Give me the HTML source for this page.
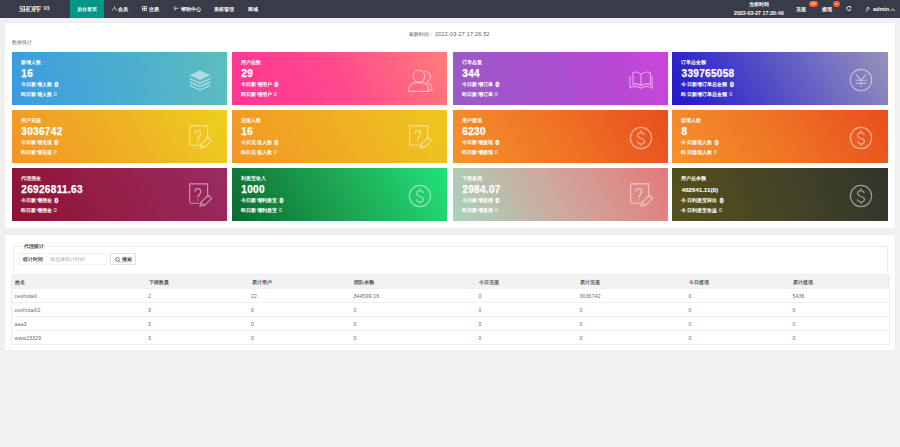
<!DOCTYPE html>
<html><head><meta charset="utf-8">
<style>
*{margin:0;padding:0;box-sizing:border-box}
html,body{width:900px;height:447px;overflow:hidden;background:#f0f0f0;font-family:"Liberation Sans",sans-serif;position:relative}
.hdr{position:absolute;left:0;top:0;width:900px;height:17.6px;background:#383c48}
.logo{position:absolute;left:19.2px;top:5.4px;font-family:"Liberation Serif",serif;color:#fff;font-size:7.3px;font-weight:normal;-webkit-text-stroke:0.15px #fff;line-height:9px;letter-spacing:-0.3px}
.logo sup{font-size:4.6px;vertical-align:top;position:relative;top:-1.4px;margin-left:3.2px;letter-spacing:0;font-family:"Liberation Sans",sans-serif}
.nav{position:absolute;top:0;height:17.6px;line-height:19.8px;color:#fff;font-size:4.7px;white-space:nowrap;font-weight:bold}
.nav.act{background:#009688;left:70px;width:34px;text-align:center}
.hi{position:absolute;fill:none;stroke:#fff;stroke-width:0.7}
.badge{position:absolute;top:1.3px;height:5.8px;border-radius:3px;background:#ff5722;color:#fff;font-size:4px;line-height:5.9px;text-align:center}
.panel{position:absolute;left:5px;top:22.8px;width:890.3px;height:205px;background:#fff;border-radius:1px;box-shadow:0 0 1px rgba(0,0,0,0.08)}
.p2{top:235px;height:114.5px}
.card{position:absolute;height:52.6px;color:#fff;overflow:hidden}
.ct{position:absolute;left:9.3px;top:6.8px;font-size:5px;line-height:6px;white-space:nowrap;font-weight:bold;letter-spacing:0px}
.cn{position:absolute;left:9.3px;top:15.6px;font-size:10px;line-height:11px;font-weight:bold;white-space:nowrap;letter-spacing:0.33px;-webkit-text-stroke:0.25px #fff}
.cn.sm{font-size:6.2px;top:15.8px;letter-spacing:0;-webkit-text-stroke:0.1px #fff}
.c3{position:absolute;left:9.3px;top:29.2px;font-size:5.3px;line-height:6px;white-space:nowrap;letter-spacing:0.1px;font-weight:bold}
.c3 b{font-size:6.8px;margin-left:1px;position:relative;top:0.6px;-webkit-text-stroke:0.35px #fff}
.c4 i{font-style:normal;font-weight:normal;margin-left:0.3px}
.c4{position:absolute;left:9.3px;top:39.3px;font-size:5.3px;line-height:6px;white-space:nowrap;letter-spacing:0.1px;font-weight:bold}
.ic{position:absolute;right:14px;top:15px;width:26px;height:26px;fill:none;stroke:rgba(255,255,255,0.5);stroke-width:1.15}
.txt{position:absolute;font-size:4.8px;line-height:6px;color:#666;white-space:nowrap}
.fs{position:absolute;left:12.5px;top:246px;width:875px;height:26px;border:0.5px solid #eee;border-bottom:none}
.legend{position:absolute;left:22.2px;top:243px;padding:0 1.6px;background:#fff;font-size:5px;line-height:6px;color:#444;font-weight:bold}
.inp{position:absolute;left:18.8px;top:253px;width:88px;height:11.5px;border:0.5px solid #f0f0f0}
.btn{position:absolute;left:110px;top:252.8px;width:25.6px;height:12.7px;border:0.5px solid #e0e0e0;border-radius:1px;font-size:4.5px;line-height:12px;color:#333}
.tbl{position:absolute;left:10.5px;top:274px;width:879.5px;height:71px;border:0.5px solid #eee}
.th{position:relative;width:100%;height:13px;background:#f2f2f2}
.th span{position:absolute;top:4.9px;font-size:4.7px;line-height:6px;color:#555;white-space:nowrap;font-weight:bold}
.tr{position:relative;height:14px;border-top:0.5px solid #f0f0f0}
.tr span{position:absolute;top:4.4px;font-size:5.1px;line-height:6px;color:#666;white-space:nowrap;letter-spacing:0.2px}
</style></head><body>
<div class="hdr">
 <div class="logo">SHOPF<sup>V3</sup></div>
 <div class="nav act">后台首页</div>
 <svg class="hi" style="left:112px;top:6.3px" width="5" height="5" viewBox="0 0 5 5"><path d="M2.5 0.5 L2.5 2 M0.5 4.6 C1 2.8 2 2 2.5 2 C3 2 4 2.8 4.5 4.6"/></svg>
 <div class="nav" style="left:118px">会员</div>
 <svg class="hi" style="left:142px;top:6.3px" width="5" height="5" viewBox="0 0 5 5"><path d="M0.5 0.5 H4.5 V4.5 H0.5 Z M0.5 2.5 H4.5 M2.5 0.5 V4.5"/></svg>
 <div class="nav" style="left:149px">交易</div>
 <svg class="hi" style="left:173.5px;top:6.3px" width="5" height="5" viewBox="0 0 5 5"><path d="M0.8 0.3 V4.7 M0.8 2.3 H4.5"/></svg>
 <div class="nav" style="left:180.5px">帮助中心</div>
 <div class="nav" style="left:214px">系统管理</div>
 <div class="nav" style="left:248px">商城</div>
 <div class="nav" style="left:748.6px;top:1.6px;height:5px;line-height:5px;font-size:4.7px">当前时间</div>
 <div class="nav" style="left:734px;top:10.3px;height:6px;line-height:6px;font-size:5.2px;letter-spacing:0.05px;font-weight:bold">2022-03-27 17:20:49</div>
 <div class="nav" style="left:795.7px;font-size:5.3px">充值</div>
 <div class="badge" style="left:809px;width:8.8px">69</div>
 <div class="nav" style="left:821.7px;font-size:5.3px">提现</div>
 <div class="badge" style="left:833px;width:6.8px">5</div>
 <svg class="hi" style="left:845.5px;top:6.4px;stroke-width:0.9" width="6" height="5" viewBox="0 0 6 5"><path d="M4.6 1.2 A2.1 2.1 0 1 0 4.9 3"/><path d="M3.6 0.4 L5 1.2 L4.2 2.4" /></svg>
 <svg class="hi" style="left:866.3px;top:6.8px" width="4" height="5" viewBox="0 0 4 5"><circle cx="2" cy="1.4" r="1.1"/><path d="M0.4 4.6 V3.4 C0.4 3 1 2.7 2 2.7"/></svg>
 <div class="nav" style="left:873px;font-size:5.5px;font-weight:bold;line-height:19px">admin</div>
 <svg class="hi" style="left:889.7px;top:7.6px;stroke-width:0.8" width="6" height="4" viewBox="0 0 6 4"><path d="M0.5 3.2 L2.7 0.8 L4.9 3.2"/></svg>
</div>

<div class="panel"></div>
<div class="txt" style="left:12px;top:39.3px;font-size:5.3px;color:#666;letter-spacing:0.1px">数据统计</div>
<div class="txt" style="left:408.5px;top:31px;font-size:5.3px;color:#555">刷新时间：&nbsp;<span style="letter-spacing:0.3px">2022-03-27&nbsp;17:26:52</span></div>
<div class="card" style="left:12px;top:52px;width:215.2px;background:linear-gradient(80deg,#3a9ce0,#5cbdbf)">
<div class="ct">新增人数</div><div class="cn">16</div>
<div class="c3">今日新增人数 <b>0</b></div><div class="c4">昨日新增人数 <i>0</i></div>
<svg class="ic" viewBox="-13 -13 26 26" width="26" height="26"><path d="M0 -9.8 L10.4 -4.8 L0 0 L-10.4 -4.8 Z" fill="rgba(255,255,255,0.5)" stroke="none"/><path d="M-10.4 -1.4 L0 3.2 L10.4 -1.4 M-10.4 2 L0 6.4 L10.4 2 M-10.4 5.4 L0 9.8 L10.4 5.4" stroke-width="1.4"/></svg></div>
<div class="card" style="left:232px;top:52px;width:215px;background:linear-gradient(60deg,#ff3494,#ff4a8c 50%,#ff7e78)">
<div class="ct">用户总数</div><div class="cn">29</div>
<div class="c3">今日新增用户 <b>0</b></div><div class="c4">昨日新增用户 <i>0</i></div>
<svg class="ic" viewBox="-13 -13 26 26" width="26" height="26"><g transform="translate(0,1)"><path d="M-1 -10.6 C2.6 -10.6 4.8 -8 4.8 -4.8 C4.8 -1.6 2.8 1.2 -1 1.2 C-4.8 1.2 -6.8 -1.6 -6.8 -4.8 C-6.8 -8 -4.6 -10.6 -1 -10.6 Z"/><path d="M-11.6 10.4 C-11.6 4.8 -8.6 2.2 -4.6 1.6 L2.6 1.6 C6.6 2.2 8.6 4.8 8.6 10.4 Z"/><path d="M4.2 -10 C8 -9.6 10.2 -7.2 10.2 -4.2 C10.2 -1.6 8.8 0.4 6.8 1.2 C10 2.2 12 4.6 12 9.2 L8.6 9.2"/></g></svg></div>
<div class="card" style="left:453px;top:52px;width:214.7px;background:linear-gradient(70deg,#9a5bc7,#aa4ecf 50%,#ca44da)">
<div class="ct">订单总量</div><div class="cn">344</div>
<div class="c3">今日新增订单 <b>0</b></div><div class="c4">昨日新增订单 <i>0</i></div>
<svg class="ic" viewBox="-13 -13 26 26" width="26" height="26"><path d="M-11 -3.9 V7.9 C-7.5 6 -3.5 6 0 8.2 C3.5 6 7.5 6 11.1 7.9 V-3.9"/><path d="M0 -5.5 C-2.5 -8 -5.5 -8.5 -8 -7.5 V4.5 C-5.5 3.5 -2.5 3.8 0 5.5 Z M0 -5.5 C2.5 -8 5.5 -8.5 9.4 -7.5 V4.5 C5.5 3.5 2.5 3.8 0 5.5 Z"/></svg></div>
<div class="card" style="left:672.2px;top:52px;width:215.7px;background:linear-gradient(60deg,#2216cc,#5650c6 47%,#7470c2 72%,#9692b8)">
<div class="ct">订单总金额</div><div class="cn">339765058</div>
<div class="c3">今日新增订单总金额 <b>0</b></div><div class="c4">昨日新增订单总金额 <i>0</i></div>
<svg class="ic" viewBox="-13 -13 26 26" width="26" height="26"><circle cx="0" cy="0" r="10.7"/><path d="M-4.9 -5.4 L0 0.4 L4.6 -5.4 M0 0.4 V7 M-5.4 0.2 H5.6 M-5.4 3.3 H5.6"/></svg></div>
<div class="card" style="left:12px;top:110px;width:215.2px;background:linear-gradient(60deg,#f39524,#eeb024 50%,#edd01e)">
<div class="ct">用户充值</div><div class="cn">3036742</div>
<div class="c3">今日新增充值 <b>0</b></div><div class="c4">昨日新增充值 <i>0</i></div>
<svg class="ic" viewBox="-13 -13 26 26" width="26" height="26"><path d="M-0.5 7.2 H-8.8 Q-10.3 7.2 -10.3 5.7 V-12.1 H7.6 V-0.8"/><path d="M-5 -4.2 C-5 -6.4 -3.6 -7.3 -2.2 -7.3 C-0.5 -7.3 0.8 -6.2 0.8 -4.4 C0.8 -1.8 -2.2 -1.2 -2.2 1.6 M-2.2 3.2 V4.5" stroke-width="1.3"/><path d="M0 10 L1 6.4 L8.2 -0.6 L11.6 2.6 L4.4 9.4 Z M1.4 6.8 L3.8 9.2"/></svg></div>
<div class="card" style="left:232px;top:110px;width:215px;background:linear-gradient(60deg,#f39526,#efae22 50%,#edc820)">
<div class="ct">充值人数</div><div class="cn">16</div>
<div class="c3">今日充值人数 <b>0</b></div><div class="c4">昨日充值人数 <i>0</i></div>
<svg class="ic" viewBox="-13 -13 26 26" width="26" height="26"><path d="M-0.5 7.2 H-8.8 Q-10.3 7.2 -10.3 5.7 V-12.1 H7.6 V-0.8"/><path d="M-5 -4.2 C-5 -6.4 -3.6 -7.3 -2.2 -7.3 C-0.5 -7.3 0.8 -6.2 0.8 -4.4 C0.8 -1.8 -2.2 -1.2 -2.2 1.6 M-2.2 3.2 V4.5" stroke-width="1.3"/><path d="M0 10 L1 6.4 L8.2 -0.6 L11.6 2.6 L4.4 9.4 Z M1.4 6.8 L3.8 9.2"/></svg></div>
<div class="card" style="left:453px;top:110px;width:214.7px;background:linear-gradient(60deg,#f5922c,#ef7324 50%,#e84e1e)">
<div class="ct">用户提现</div><div class="cn">6230</div>
<div class="c3">今日新增提现 <b>0</b></div><div class="c4">昨日新增提现 <i>0</i></div>
<svg class="ic" viewBox="-13 -13 26 26" width="26" height="26"><circle cx="0" cy="0" r="10.6"/><path d="M3.2 -3 C2.7 -4.7 1.4 -5.4 -0.1 -5.4 C-2.2 -5.4 -3.4 -4.1 -3.4 -2.5 C-3.4 1 3.4 0 3.4 3.2 C3.4 4.9 2 6 0 6 C-1.9 6 -3.2 5 -3.6 3.4 M0 -7.8 V-5.4 M0 6 V8" stroke-width="1.2"/></svg></div>
<div class="card" style="left:672.2px;top:110px;width:215.7px;background:linear-gradient(60deg,#f5922c,#ef7324 50%,#e84e1e)">
<div class="ct">提现人数</div><div class="cn">8</div>
<div class="c3">今日提现人数 <b>0</b></div><div class="c4">昨日提现人数 <i>0</i></div>
<svg class="ic" viewBox="-13 -13 26 26" width="26" height="26"><circle cx="0" cy="0" r="10.6"/><path d="M3.2 -3 C2.7 -4.7 1.4 -5.4 -0.1 -5.4 C-2.2 -5.4 -3.4 -4.1 -3.4 -2.5 C-3.4 1 3.4 0 3.4 3.2 C3.4 4.9 2 6 0 6 C-1.9 6 -3.2 5 -3.6 3.4 M0 -7.8 V-5.4 M0 6 V8" stroke-width="1.2"/></svg></div>
<div class="card" style="left:12px;top:168px;width:215.2px;background:linear-gradient(60deg,#8e1332,#9a2c62)">
<div class="ct">代理佣金</div><div class="cn">26926811.63</div>
<div class="c3">今日新增佣金 <b>0</b></div><div class="c4">昨日新增佣金 <i>0</i></div>
<svg class="ic" viewBox="-13 -13 26 26" width="26" height="26"><path d="M-0.5 7.2 H-8.8 Q-10.3 7.2 -10.3 5.7 V-12.1 H7.6 V-0.8"/><path d="M-5 -4.2 C-5 -6.4 -3.6 -7.3 -2.2 -7.3 C-0.5 -7.3 0.8 -6.2 0.8 -4.4 C0.8 -1.8 -2.2 -1.2 -2.2 1.6 M-2.2 3.2 V4.5" stroke-width="1.3"/><path d="M0 10 L1 6.4 L8.2 -0.6 L11.6 2.6 L4.4 9.4 Z M1.4 6.8 L3.8 9.2"/></svg></div>
<div class="card" style="left:232px;top:168px;width:215px;background:linear-gradient(60deg,#0c6a30,#1da552 50%,#22e27a)">
<div class="ct">利息宝收入</div><div class="cn">1000</div>
<div class="c3">今日新增利息宝 <b>0</b></div><div class="c4">昨日新增利息宝 <i>0</i></div>
<svg class="ic" viewBox="-13 -13 26 26" width="26" height="26"><circle cx="0" cy="0" r="10.6"/><path d="M3.2 -3 C2.7 -4.7 1.4 -5.4 -0.1 -5.4 C-2.2 -5.4 -3.4 -4.1 -3.4 -2.5 C-3.4 1 3.4 0 3.4 3.2 C3.4 4.9 2 6 0 6 C-1.9 6 -3.2 5 -3.6 3.4 M0 -7.8 V-5.4 M0 6 V8" stroke-width="1.2"/></svg></div>
<div class="card" style="left:453px;top:168px;width:214.7px;background:linear-gradient(60deg,#a8d4bc,#cea89c 48%,#e5797b)">
<div class="ct">下级返佣</div><div class="cn">2984.07</div>
<div class="c3">今日新增返佣 <b>0</b></div><div class="c4">昨日新增返佣 <i>0</i></div>
<svg class="ic" viewBox="-13 -13 26 26" width="26" height="26"><path d="M-0.5 7.2 H-8.8 Q-10.3 7.2 -10.3 5.7 V-12.1 H7.6 V-0.8"/><path d="M-5 -4.2 C-5 -6.4 -3.6 -7.3 -2.2 -7.3 C-0.5 -7.3 0.8 -6.2 0.8 -4.4 C0.8 -1.8 -2.2 -1.2 -2.2 1.6 M-2.2 3.2 V4.5" stroke-width="1.3"/><path d="M0 10 L1 6.4 L8.2 -0.6 L11.6 2.6 L4.4 9.4 Z M1.4 6.8 L3.8 9.2"/></svg></div>
<div class="card" style="left:672.2px;top:168px;width:215.7px;background:linear-gradient(70deg,#56511b,#454426 50%,#31342d)">
<div class="ct">用户总余额</div><div class="cn sm">462541.11(0)</div>
<div class="c3">今日利息宝转出 <b>0</b></div><div class="c4">今日利息宝收益 <i>0</i></div>
<svg class="ic" viewBox="-13 -13 26 26" width="26" height="26"><circle cx="0" cy="0" r="10.6"/><path d="M3.2 -3 C2.7 -4.7 1.4 -5.4 -0.1 -5.4 C-2.2 -5.4 -3.4 -4.1 -3.4 -2.5 C-3.4 1 3.4 0 3.4 3.2 C3.4 4.9 2 6 0 6 C-1.9 6 -3.2 5 -3.6 3.4 M0 -7.8 V-5.4 M0 6 V8" stroke-width="1.2"/></svg></div>

<div class="panel p2"></div>
<div class="fs"></div>
<div class="legend">代理统计</div>
<div class="inp"><span class="txt" style="left:3.5px;top:2.6px;font-size:4.8px;color:#555;font-weight:bold">统计时间</span><span class="txt" style="left:30.5px;top:2.6px;font-size:4.9px;color:#aaa">请选择统计时间</span></div>
<div class="btn"><svg style="position:absolute;left:3.6px;top:3.2px;fill:none;stroke:#555;stroke-width:0.8" width="6" height="6" viewBox="0 0 6 6"><circle cx="2.4" cy="2.4" r="1.8"/><path d="M3.7 3.7 L5.4 5.4"/></svg><span style="position:absolute;left:10.6px;top:0.3px;font-weight:bold;color:#444">搜索</span></div>
<div class="tbl">
 <div class="th"><span style="left:3.5px">姓名</span><span style="left:137.0px">下级数量</span><span style="left:240.0px">累计用户</span><span style="left:342.5px">团队余额</span><span style="left:467.5px">今日充值</span><span style="left:568.5px">累计充值</span><span style="left:677.5px">今日提现</span><span style="left:781.5px">累计提现</span></div>
 <div class="tr"><span style="left:3px">ceshidaili</span><span style="left:136.5px">2</span><span style="left:239.5px">22</span><span style="left:342px">344599.16</span><span style="left:467px">0</span><span style="left:568px">3036742</span><span style="left:677px">0</span><span style="left:781px">5436</span></div><div class="tr"><span style="left:3px">ceshidaili2</span><span style="left:136.5px">3</span><span style="left:239.5px">0</span><span style="left:342px">0</span><span style="left:467px">0</span><span style="left:568px">0</span><span style="left:677px">0</span><span style="left:781px">0</span></div><div class="tr"><span style="left:3px">aaa3</span><span style="left:136.5px">3</span><span style="left:239.5px">0</span><span style="left:342px">0</span><span style="left:467px">0</span><span style="left:568px">0</span><span style="left:677px">0</span><span style="left:781px">0</span></div><div class="tr"><span style="left:3px">www23329</span><span style="left:136.5px">3</span><span style="left:239.5px">0</span><span style="left:342px">0</span><span style="left:467px">0</span><span style="left:568px">0</span><span style="left:677px">0</span><span style="left:781px">0</span></div>
</div>
</body></html>
